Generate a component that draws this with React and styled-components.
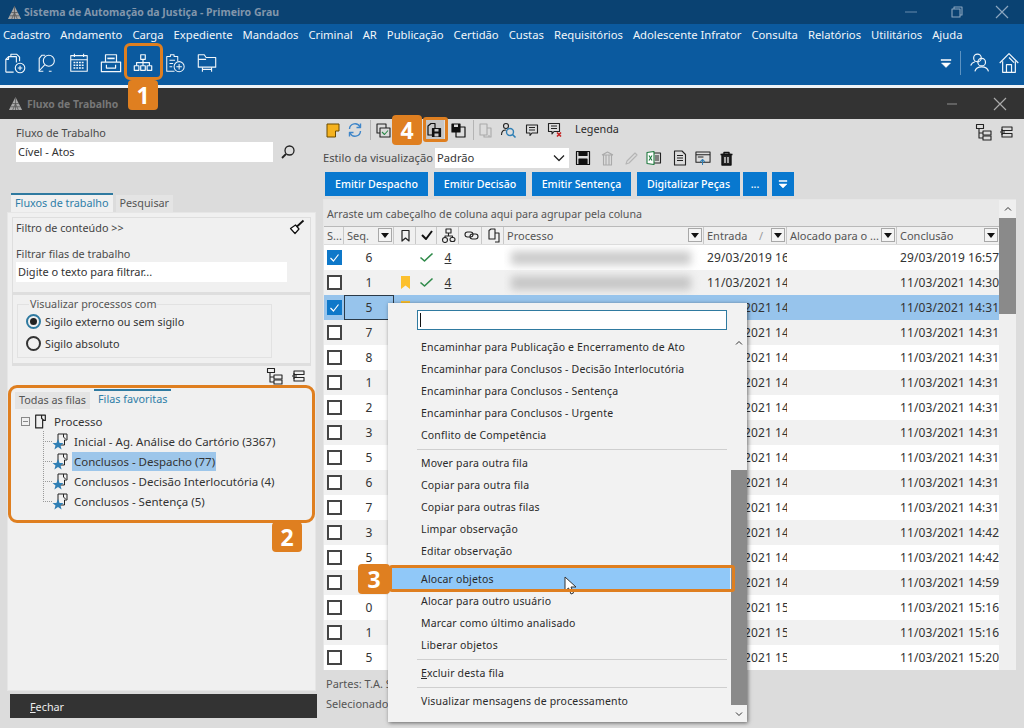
import * as React from 'react';
import styled, { createGlobalStyle } from 'styled-components';

const FONT = '"Noto Sans", "Open Sans", "Liberation Sans", sans-serif';

const Global = createGlobalStyle`
  html, body { margin: 0; padding: 0; background: #dcdcdc; }
  * { box-sizing: border-box; }
`;

const Page = styled.div`
  position: relative;
  width: 1024px;
  height: 728px;
  overflow: hidden;
  display: flex;
  flex-direction: column;
  font-family: ${FONT};
  font-size: 10.8px;
  color: #2b2b2b;
  background: #dcdcdc;
`;

const AppTitle = styled.div`
  height: 24px;
  display: flex;
  align-items: center;
  padding-left: 7px;
  gap: 2px;
  background: #0a4272;
`;
const WindowTitle = styled.div`
  height: 31px;
  background: #333;
  display: flex;
  align-items: center;
  padding-left: 8px;
  gap: 4px;
`;
const TitleText = styled.span`
  font-weight: 700;
  font-size: ${p => p.$size}px;
  color: ${p => p.$color};
`;
const WinButtons = styled.div`
  margin-left: auto;
  margin-top: ${p => p.$top || 0}px;
  display: flex;
  align-items: center;
  gap: ${p => p.$gap}px;
  padding-right: ${p => p.$right}px;
`;
const TopBand = styled.div`
  height: 61px;
  background: #0b5a9f;
  display: flex;
  flex-direction: column;
`;
const MenuBar = styled.div`
  height: 20px;
  display: flex;
  align-items: center;
  padding-left: 3px;
  gap: 10px;
  color: #f2f6fa;
  font-size: 11.25px;
  white-space: nowrap;
`;
const ToolBar = styled.div`
  height: 38px;
  display: flex;
  align-items: center;
  padding-left: 4px;
  gap: 10px;
`;
const ToolRight = styled.div`
  margin-left: auto;
  display: flex;
  align-items: center;
  padding-right: 4px;
`;
const ToolDivider = styled.div`
  width: 1px;
  height: 24px;
  background: #5d93c2;
  margin: 0 8px 0 8px;
`;
const ToolGap = styled.span`
  width: 7px;
`;
const WhiteLine = styled.div`
  height: 3px;
  background: #eef3f7;
`;
const Main = styled.div`
  flex: 1;
  display: flex;
  min-height: 0;
`;

const Left = styled.div`
  width: 320px;
  padding: 6px 4px 10px 7px;
  display: flex;
  flex-direction: column;
`;
const Label = styled.div`
  color: #4a4a4a;
  line-height: 15px;
  margin-bottom: ${p => p.$mb || 0}px;
`;
const FieldBlock = styled.div`
  padding-left: 9px;
`;
const FieldRow = styled.div`
  display: flex;
  align-items: center;
  gap: 7px;
  margin-top: 2px;
`;
const TextBox = styled.div`
  width: ${p => p.$w}px;
  height: 20px;
  padding-left: 2px;
  background: #fff;
  line-height: 20px;
  font-size: 11px;
  color: #333;
`;
const Tabs = styled.div`
  display: flex;
  align-items: flex-end;
  gap: 3px;
  margin: 31px 0 0 4px;
`;
const Tab = styled.div`
  padding: 0 4px;
  height: ${p => (p.$active ? 19 : 17)}px;
  line-height: 16px;
  white-space: nowrap;
  color: ${p => (p.$active ? '#2f7ea8' : '#555')};
  background: ${p => (p.$active ? '#f0f0f0' : '#e4e4e4')};
  border-top: ${p => (p.$active ? '2px solid #2f7aa0' : 'none')};
`;
const TabPanel = styled.div`
  flex: 1;
  background: #f0f0f0;
  border: 1px solid #e6e6e6;
  padding: 4px 4px 0 4px;
  display: flex;
  flex-direction: column;
`;
const FilterSection = styled.div`
  height: 78px;
  padding: 0 5px 0 3px;
  border: 1px solid #dedede;
  border-width: 1px 1px 3px 1px;
`;
const FilterHead = styled.div`
  display: flex;
  justify-content: space-between;
  align-items: center;
  height: 18px;
  margin-bottom: 10px;
  color: #444;
`;
const VisSection = styled.div`
  height: 71px;
  padding: 9px 0 0 4px;
  border: 1px solid #dedede;
  border-width: 0 1px 3px 1px;
`;
const GroupBox = styled.div`
  position: relative;
  width: 255px;
  height: 54px;
  border: 1px solid #e2e2e2;
  padding: 5px 0 0 8px;
`;
const GroupTitle = styled.span`
  position: absolute;
  top: -9px;
  left: 11px;
  padding: 0 1px;
  background: #f0f0f0;
  color: #555;
`;
const RadioRow = styled.div`
  display: flex;
  align-items: center;
  gap: 4px;
  height: 22px;
  color: #333;
`;
const Radio = styled.span`
  width: 15px;
  height: 15px;
  border-radius: 50%;
  border: 2px solid ${p => (p.$on ? '#2f7aa0' : '#333')};
  display: flex;
  align-items: center;
  justify-content: center;
  &::after {
    content: '';
    width: 7px;
    height: 7px;
    border-radius: 50%;
    background: ${p => (p.$on ? '#222' : 'transparent')};
  }
`;
const TreeTools = styled.div`
  height: 20px;
  display: flex;
  justify-content: flex-end;
  align-items: center;
  gap: 7px;
  padding-right: 6px;
`;
const TreeTabs = styled.div`
  display: flex;
  gap: 4px;
  padding-left: 3px;
  margin-top: 6px;
`;
const TreeTab = styled.div`
  height: 17px;
  padding: 0 4px;
  line-height: 16px;
  color: ${p => (p.$active ? '#2f7ea8' : '#555')};
  background: ${p => (p.$active ? 'transparent' : '#e4e4e4')};
  border-top: ${p => (p.$active ? '2px solid #2f7aa0' : 'none')};
  margin-top: ${p => (p.$active ? -3 : 0)}px;
  white-space: nowrap;
`;
const TreeList = styled.div`
  margin-top: 2px;
  padding-left: 9px;
  font-size: 11.5px;
`;
const TreeRoot = styled.div`
  height: 20px;
  display: flex;
  align-items: center;
  gap: 3px;
  color: #333;
`;
const Plus = styled.span`
  width: 9px;
  height: 9px;
  border: 1px solid #888;
  background: linear-gradient(#888, #888) center / 5px 1px no-repeat;
`;
const TreeNode = styled.div`
  height: 20px;
  display: flex;
  align-items: center;
  margin-left: 22px;
  padding-left: 9px;
  gap: 2px;
  color: #333;
  background:
    repeating-linear-gradient(#999 0 1px, transparent 1px 2px) 0 0 / 1px ${p => (p.$last ? '50%' : '100%')} no-repeat,
    repeating-linear-gradient(90deg, #999 0 1px, transparent 1px 2px) 0 50% / 9px 1px no-repeat;
`;
const NodeText = styled.span`
  padding: 0 1px 0 2px;
  line-height: 19px;
  white-space: nowrap;
  background: ${p => (p.$sel ? '#9dc6ea' : 'transparent')};
`;
const CloseBar = styled.div`
  height: 24px;
  margin: 3px -1px 0 3px;
  background: #333;
  color: #eee;
  line-height: 25px;
  padding-left: 20px;
  u { text-decoration: underline; }
`;

const Right = styled.div`
  flex: 1;
  min-width: 0;
  padding: 0 8px 0 3px;
  display: flex;
  flex-direction: column;
`;
const ActionBar = styled.div`
  height: 22px;
  padding-left: 2px;
  display: flex;
  align-items: center;
`;
const BarSep = styled.span`
  width: 1px;
  height: 20px;
  background: #b4b4b4;
  margin: 0 ${p => p.$m ?? 6}px;
  flex-shrink: 0;
`;
const IconSlot = styled.span`
  width: ${p => p.$w}px;
  height: ${p => (p.$hl ? '20px' : 'auto')};
  display: flex;
  align-items: center;
  justify-content: center;
  flex-shrink: 0;
  background: ${p => (p.$hl ? '#c6c6c6' : 'transparent')};
`;
const LegendLink = styled.span`
  margin-left: 9px;
  line-height: 20px;
  padding-bottom: 2px;
`;
const StyleRow = styled.div`
  height: 20px;
  margin-top: 7px;
  display: flex;
  align-items: center;
  white-space: nowrap;
  color: #4a4a4a;
  font-size: 11.2px;
`;
const StyleLabel = styled.span`
  width: 112px;
  padding-bottom: 1px;
`;
const SelectBox = styled.div`
  width: 134px;
  height: 20px;
  margin-right: 2px;
  padding: 0 4px 1px 2px;
  background: #fff;
  color: #333;
  display: flex;
  align-items: center;
  justify-content: space-between;
`;
const Buttons = styled.div`
  display: flex;
  gap: 6px;
  padding-left: 2px;
  margin-top: 4px;
`;
const Btn = styled.div`
  width: ${p => p.$w}px;
  height: 24px;
  margin-left: ${p => p.$ml || 0}px;
  background: #0878cf;
  color: #fff;
  font-size: 10.6px;
  font-weight: 500;
  display: flex;
  align-items: center;
  justify-content: center;
`;
const GridWrap = styled.div`
  margin-top: 3px;
  height: 471px;
  display: flex;
  background: #f2f2f2;
  border: 1px solid #e6e6e6;
  border-width: 1px 0 0 1px;
`;
const GridBody = styled.div`
  flex: 1;
  min-width: 0;
`;
const GroupHint = styled.div`
  height: 26px;
  line-height: 28px;
  padding-left: 3px;
  background: #e8e8e8;
  color: #555;
  font-size: 10.7px;
`;
const Cols = styled.div`
  display: grid;
  grid-template-columns: 20px 50px 22px 21px 22px 23px 22px 200px 83px 110px 103px;
`;
const HeadRow = styled(Cols)`
  height: 19px;
  background: #f0f0f0;
  border-top: 1px solid #b9b9b9;
  border-bottom: 1px solid #dcdcdc;
`;
const HeadCell = styled.div`
  display: flex;
  align-items: center;
  justify-content: ${p => (p.$center ? 'center' : 'space-between')};
  padding: 0 1px 1px 3px;
  border-right: 1px solid #c8c8c8;
  color: #555;
  font-size: 11px;
  overflow: hidden;
  white-space: nowrap;
`;
const SortMark = styled.span`
  color: #999;
  margin-left: auto;
  margin-right: 8px;
`;
const FilterBtn = styled.span`
  width: 14px;
  height: 14px;
  flex-shrink: 0;
  border: 1px solid #a8a8a8;
  background: #f4f4f4;
  display: flex;
  align-items: center;
  justify-content: center;
  &::after {
    content: '';
    border: 4px solid transparent;
    border-top: 5px solid #111;
    border-bottom: 0;
  }
`;
const Row = styled(Cols)`
  height: 25px;
  background: ${p => (p.$sel ? '#97c4ec' : p.$alt ? '#f1f1f1' : '#fff')};
  color: #333;
`;
const Cell = styled.div`
  display: flex;
  align-items: center;
  justify-content: center;
  overflow: hidden;
  white-space: nowrap;
  font-size: 12px;
  line-height: 13px;
  min-width: 0;
`;
const SeqCell = styled(Cell)`
  border: ${p => (p.$focus ? '1px solid #2b3a48' : 'none')};
`;
const DateCell = styled(Cell)`
  justify-content: flex-start;
  padding-left: 3px;
  letter-spacing: 0.1px;
`;
const Check = styled.span`
  width: 15px;
  height: 15px;
  display: flex;
  align-items: center;
  justify-content: center;
  background: ${p => (p.$on ? '#0e78c9' : '#fff')};
  border: 2px solid ${p => (p.$on ? '#0e78c9' : '#444')};
`;
const CountLink = styled.span`
  text-decoration: underline;
  font-size: 12px;
  line-height: 15px;
`;
const Smudge = styled.div`
  width: 180px;
  height: 14px;
  margin-left: 4px;
  background: #a9a9a9;
  filter: blur(4px);
  opacity: 0.6;
`;
const ScrollCol = styled.div`
  width: 17px;
  background: #efefef;
  display: flex;
  flex-direction: column;
  align-items: stretch;
`;
const ScrollArrow = styled.div`
  height: ${p => p.$h}px;
  display: flex;
  align-items: center;
  justify-content: center;
`;
const ScrollThumb = styled.div`
  height: ${p => p.$h}px;
  background: #8a8a8a;
`;
const StatusLine = styled.div`
  height: 20px;
  line-height: 20px;
  padding-left: 3px;
  color: #555;
  font-size: 11px;
  white-space: nowrap;
`;
const Status = styled.div`
  margin-top: 4px;
`;

const Menu = styled.div`
  position: absolute;
  left: 388px;
  top: 303px;
  width: 359px;
  height: 419px;
  display: flex;
  background: #f2f2f2;
  box-shadow: 1px 1px 4px rgba(0, 0, 0, 0.55);
`;
const MenuList = styled.div`
  flex: 1;
  padding-top: 7px;
`;
const MenuInput = styled.div`
  width: 310px;
  height: 20px;
  margin: 0 0 6px 29px;
  background: #fff;
  border: 1px solid #2f7aa0;
  display: flex;
  align-items: center;
  padding-left: 2px;
  &::after {
    content: '';
    width: 1px;
    height: 14px;
    background: #111;
  }
`;
const MenuItem = styled.div`
  height: 22px;
  line-height: 22px;
  margin-left: 2px;
  margin-right: 1px;
  padding-left: 31px;
  color: #2a2a2a;
  font-size: 10.5px;
  letter-spacing: 0.17px;
  background: ${p => (p.$hot ? '#90c8f8' : 'transparent')};
  white-space: nowrap;
  u { text-decoration: underline; }
`;
const MenuSep = styled.div`
  height: 6px;
  margin: 0 4px 0 29px;
  display: flex;
  align-items: center;
  &::after {
    content: '';
    flex: 1;
    height: 1px;
    background: #cfcfcf;
  }
`;
const MenuScroll = styled.div`
  width: 16px;
  margin-top: 33px;
  display: flex;
  flex-direction: column;
`;
const ScrollGap = styled.div`
  flex: 1;
`;

const CalloutBox = styled.div`
  position: absolute;
  left: ${p => p.$x}px;
  top: ${p => p.$y}px;
  width: ${p => p.$w}px;
  height: ${p => p.$h}px;
  border: 3px solid #df7f20;
  border-radius: ${p => p.$r ?? 6}px;
`;
const CalloutTag = styled.div`
  position: absolute;
  left: ${p => p.$x}px;
  top: ${p => p.$y}px;
  width: ${p => p.$w || 30}px;
  height: 30px;
  background: #df7f20;
  border-radius: 4px;
  color: #fff;
  font-family: "Open Sans", sans-serif;
  font-weight: 700;
  font-size: 23px;
  line-height: 30px;
  text-align: center;
`;
const Pointer = styled.svg`
  position: absolute;
  left: 564px;
  top: 576px;
`;

const Svg = ({ s = 16, vb, c = '#222', w = 1.1, fill = 'none', children }) => (
  <svg
    width={s}
    height={s}
    viewBox={vb || `0 0 ${s} ${s}`}
    fill={fill}
    stroke={c}
    strokeWidth={w}
    strokeLinejoin="round"
  >
    {children}
  </svg>
);

const Logo = ({ s = 16 }) => (
  <svg width={s} height={s} viewBox="0 0 16 16">
    <polygon points="8,1 15,15 1,15" fill="#a8a8a8" />
    <path d="M8 1V15M4.5 8H11.5M3 11.5H13M5 15L8 8L11 15" stroke="#555" strokeWidth="0.8" fill="none" />
  </svg>
);

const W = '#f2f7fb';
const TOOL_ICONS = [
  <Svg s={24} c={W} w={1.2}>
    <path d="M7.5 5V2.5H14L17 5.5V10" />
    <path d="M2 22V8L5 5H13.5V11.5M2 22H10.5" />
    <path d="M5 5V8H2" />
    <circle cx="17.5" cy="17.5" r="5.2" />
    <path d="M17.5 15V20M15 17.5H20" />
  </Svg>,
  <Svg s={24} c={W} w={1.2}>
    <path d="M8 21H3.5V7L6.5 3.5H10M17 21H14" />
    <circle cx="14" cy="9.5" r="6" />
    <path d="M9.5 14L3 21" />
  </Svg>,
  <Svg s={24} c={W} w={1.2}>
    <rect x="3" y="4" width="18" height="17" />
    <path d="M3 8.5H21M7 2V5.5M17 2V5.5" />
    <path d="M6 11.5H18M6 14.5H18M6 17.5H18" strokeDasharray="2 1" strokeWidth="1.6" />
  </Svg>,
  <Svg s={24} c={W} w={1.3}>
    <path d="M6 11V3H18V11" />
    <path d="M8 7H16" strokeWidth="1.8" />
    <path d="M1.5 11H22.5V21.5H1.5Z" />
    <path d="M7 14V17.5H17V14" />
  </Svg>,
  <Svg s={24} c={W} w={1.3}>
    <rect x="9.5" y="3" width="5" height="5" />
    <rect x="2.5" y="15" width="5" height="5" />
    <rect x="9.5" y="15" width="5" height="5" />
    <rect x="16.5" y="15" width="5" height="5" />
    <path d="M12 8V15M5 15V11.5H19V15" />
  </Svg>,
  <Svg s={24} c={W} w={1.1}>
    <path d="M11.5 21H3V5H7V3H11V5H15V10" />
    <path d="M6 9H12M6 12.5H10M6 16H9" />
    <circle cx="16.5" cy="16" r="5.5" />
    <path d="M16.5 13V19M13.5 16H19.5" />
  </Svg>,
  <Svg s={24} c={W} w={1.2}>
    <path d="M2.5 16.5V3H9L11 6H21.5V16.5H2.5Z" />
    <path d="M2.5 8H11M7 16.5V21.5M17 16.5V21.5M7 19H17" />
  </Svg>
];

const MENU = [
  'Cadastro', 'Andamento', 'Carga', 'Expediente', 'Mandados', 'Criminal', 'AR', 'Publicação',
  'Certidão', 'Custas', 'Requisitórios', 'Adolescente Infrator', 'Consulta', 'Relatórios', 'Utilitários', 'Ajuda'
];

const D = (t, d = '11/03/2021') => `${d} ${t}`;
const ROWS = [
  { seq: 6, on: true, ok: true, date: D('16:57', '29/03/2019') },
  { seq: 1, mark: true, ok: true, date: D('14:30') },
  { seq: 5, on: true, mark: true, ok: true, date: D('14:31'), sel: true },
  { seq: 7, date: D('14:31') },
  { seq: 8, date: D('14:31') },
  { seq: 1, date: D('14:31') },
  { seq: 2, date: D('14:31') },
  { seq: 3, date: D('14:31') },
  { seq: 5, date: D('14:31') },
  { seq: 6, date: D('14:31') },
  { seq: 7, date: D('14:31') },
  { seq: 3, date: D('14:42') },
  { seq: 5, date: D('14:42') },
  { seq: '', date: D('14:59') },
  { seq: 0, date: D('15:16') },
  { seq: 1, date: D('15:16') },
  { seq: 5, date: D('15:20') }
];

const NODES = [
  'Inicial - Ag. Análise do Cartório (3367)',
  'Conclusos - Despacho (77)',
  'Conclusos - Decisão Interlocutória (4)',
  'Conclusos - Sentença (5)'
];

const MENU_ITEMS = [
  ['Encaminhar para Publicação e Encerramento de Ato', 'Encaminhar para Conclusos - Decisão Interlocutória', 'Encaminhar para Conclusos - Sentença', 'Encaminhar para Conclusos - Urgente', 'Conflito de Competência'],
  ['Mover para outra fila', 'Copiar para outra fila', 'Copiar para outras filas', 'Limpar observação', 'Editar observação'],
  ['Alocar objetos', 'Alocar para outro usuário', 'Marcar como último analisado', 'Liberar objetos'],
  [<React.Fragment key="x"><u>E</u>xcluir desta fila</React.Fragment>],
  ['Visualizar mensagens de processamento']
];

const PageIcon = ({ c = '#222', s = 14 }) => (
  <Svg s={s} vb="0 0 14 14" c={c}>
    <path d="M2.5 1H11.5V6H9V13H2.5Z" />
    <path d="M8 1V4L10 6" />
  </Svg>
);

const StarDoc = () => (
  <svg width="18" height="18" viewBox="0 0 18 18">
    <path d="M6 2H15V8H12.5V13H6Z" fill="none" stroke="#222" strokeWidth="1" />
    <path d="M11.5 2V5L13.5 7" fill="none" stroke="#222" strokeWidth="1" />
    <polygon points="6,7 7.6,11 11.5,11 8.5,13.5 9.6,17.5 6,15 2.4,17.5 3.5,13.5 0.5,11 4.4,11" fill="#2f7fb5" />
  </svg>
);

const TreeIcon = ({ c = '#222' }) => (
  <Svg s={18} c={c} w={1.1}>
    <rect x="1.5" y="1.5" width="7" height="4" />
    <path d="M4 5.5V15H8M4 10H8" />
    <rect x="8" y="8" width="8" height="4" />
    <rect x="8" y="13" width="8" height="4" />
  </Svg>
);

const CollapseIcon = () => (
  <Svg s={14} c="#222">
    <rect x="3" y="2" width="10" height="3.5" />
    <rect x="3" y="8.5" width="10" height="3.5" />
    <path d="M3 4V10M1 7H6" />
  </Svg>
);

const SaveIcon = ({ c = '#111' }) => (
  <Svg s={16} c={c} w={1.2}>
    <path d="M1.5 1.5H14.5V14.5H1.5Z" />
    <rect x="4" y="1.5" width="8" height="4" fill={c} />
    <rect x="4" y="9" width="8" height="5.5" fill={c} />
  </Svg>
);

const Chevron = ({ up }) => (
  <Svg s={10} c="#333" w={1}>
    <path d={up ? 'M2 6.5L5 3.5L8 6.5' : 'M2 3.5L5 6.5L8 3.5'} />
  </Svg>
);

export default function App() {
  return (
    <Page>
      <Global />
      <AppTitle>
        <Logo s={15} />
        <TitleText $color="#8296ab" $size={10.5}>Sistema de Automação da Justiça - Primeiro Grau</TitleText>
        <WinButtons $gap={31} $right={14}>
          <Svg s={14} c="#5f86a8"><path d="M1 7H13" /></Svg>
          <Svg s={14} c="#8ba6bf"><path d="M3 4H11V12H3Z M5 4V2H13V10H11" /></Svg>
          <Svg s={16} c="#8ba6bf" w={1.2}><path d="M2 2L14 14M14 2L2 14" /></Svg>
        </WinButtons>
      </AppTitle>
      <TopBand>
        <MenuBar>{MENU.map(m => <span key={m}>{m}</span>)}</MenuBar>
        <ToolBar>
          {TOOL_ICONS.map((icon, i) => <IconSlot key={i} $w={22}>{icon}</IconSlot>)}
          <ToolRight>
            <Svg s={12} c="#fff" fill="#fff" w={0.5}>
              <path d="M1 2.5H11V3.5H1Z" />
              <path d="M1.5 6H10.5L6 10.5Z" />
            </Svg>
            <ToolDivider />
            <Svg s={22} vb="0 0 26 26" c={W} w={1.4}>
              <circle cx="10" cy="7" r="4.5" />
              <path d="M2 16C3 13 5 12 7 11.5" />
              <circle cx="15" cy="12" r="4.5" />
              <path d="M7 23C8 19 11 17.5 15 17.5C19 17.5 22 19 23 23" />
            </Svg>
            <ToolGap />
            <Svg s={22} vb="0 0 26 26" c={W} w={1.4}>
              <path d="M2 13L13 2L24 13" />
              <path d="M5.5 11V24H20.5V11" />
              <path d="M10 24V15H16V24" />
              <path d="M13 6.5L19 12.5" />
            </Svg>
          </ToolRight>
        </ToolBar>
      </TopBand>
      <WhiteLine />
      <WindowTitle>
        <Logo s={15} />
        <TitleText $color="#777" $size={10.4}>Fluxo de Trabalho</TitleText>
        <WinButtons $gap={34} $right={16}>
          <Svg s={12} c="#888"><path d="M1 6H11" /></Svg>
          <Svg s={16} c="#aaa" w={1.2}><path d="M2 2L14 14M14 2L2 14" /></Svg>
        </WinButtons>
      </WindowTitle>
      <Main>
        <Left>
          <FieldBlock>
            <Label>Fluxo de Trabalho</Label>
            <FieldRow>
              <TextBox $w={257}>Cível - Atos</TextBox>
              <Svg s={16} c="#222" w={1.3}>
                <circle cx="9.5" cy="6.5" r="4.5" />
                <path d="M6 10L2 14" strokeWidth="1.8" />
              </Svg>
            </FieldRow>
          </FieldBlock>
          <Tabs>
            <Tab $active>Fluxos de trabalho</Tab>
            <Tab>Pesquisar</Tab>
          </Tabs>
          <TabPanel>
            <FilterSection>
              <FilterHead>
                <span>Filtro de conteúdo &gt;&gt;</span>
                <Svg s={16} c="#111" w={1.2}>
                  <path d="M1.5 9.5L6.5 6L10 10L6 14.5Z" fill="#fff" />
                  <path d="M8 7.5L14.5 1.5" strokeWidth="1.8" />
                </Svg>
              </FilterHead>
              <Label $mb={1}>Filtrar filas de trabalho</Label>
              <TextBox $w={271}>Digite o texto para filtrar...</TextBox>
            </FilterSection>
            <VisSection>
              <GroupBox>
                <GroupTitle>Visualizar processos com</GroupTitle>
                <RadioRow><Radio $on />Sigilo externo ou sem sigilo</RadioRow>
                <RadioRow><Radio />Sigilo absoluto</RadioRow>
              </GroupBox>
            </VisSection>
            <TreeTools>
              <TreeIcon />
              <CollapseIcon />
            </TreeTools>
            <TreeTabs>
              <TreeTab>Todas as filas</TreeTab>
              <TreeTab $active>Filas favoritas</TreeTab>
            </TreeTabs>
            <TreeList>
              <TreeRoot><Plus /><PageIcon s={15} /><span>&nbsp;Processo</span></TreeRoot>
              {NODES.map((n, i) => (
                <TreeNode key={n} $last={i === NODES.length - 1}>
                  <StarDoc />
                  <NodeText $sel={i === 1}>{n}</NodeText>
                </TreeNode>
              ))}
            </TreeList>
          </TabPanel>
          <CloseBar><u>F</u>echar</CloseBar>
        </Left>
        <Right>
          <ActionBar>
            <IconSlot $w={15}>
              <svg width="14" height="15" viewBox="0 0 14 15">
                <path d="M1 1H13V8H9.5V14H1Z" fill="#f5b21e" stroke="#6b4a00" strokeWidth="1" />
              </svg>
            </IconSlot>
            <IconSlot $w={30}>
              <Svg s={16} c="#3f86c9" w={1.4}>
                <path d="M2.5 7A5.5 5.5 0 0 1 13 5M13.5 9A5.5 5.5 0 0 1 3 11" />
                <path d="M13.5 1.5V5.5H9.5M2.5 14.5V10.5H6.5" />
              </Svg>
            </IconSlot>
            <BarSep $m={0} />
            <IconSlot $w={24}>
              <Svg s={15} c="#222">
                <rect x="1" y="1" width="9" height="9" />
                <rect x="4" y="5" width="10" height="9" fill="#dcdcdc" />
                <path d="M6 9L8.5 11.5L12 7.5" stroke="#2c8a4a" />
              </Svg>
            </IconSlot>
            <IconSlot $w={29} />
            <IconSlot $w={20} $hl>
              <Svg s={16} c="#111" w={1.2}>
                <path d="M7 13H2V4L5 1.5H9V6" />
                <rect x="6.5" y="6.5" width="8" height="8" fill="#111" />
                <rect x="8.5" y="7" width="4" height="2.5" fill="#c6c6c6" stroke="none" />
                <rect x="8.5" y="11.5" width="4" height="3" fill="#c6c6c6" stroke="none" />
              </Svg>
            </IconSlot>
            <IconSlot $w={28}>
              <Svg s={15} c="#111" w={1.2}>
                <rect x="1" y="1" width="8" height="8" fill="#111" />
                <rect x="3" y="1.5" width="4" height="2.5" fill="#dcdcdc" stroke="none" />
                <path d="M9 4H14V14H5V9" />
              </Svg>
            </IconSlot>
            <BarSep $m={1} />
            <IconSlot $w={21}>
              <Svg s={15} c="#aaa">
                <path d="M2 1H9V12H2Z" />
                <path d="M9 5H13V14H6V12M11 12V14" />
              </Svg>
            </IconSlot>
            <IconSlot $w={24}>
              <Svg s={17} c="#222">
                <circle cx="6" cy="4" r="2.5" />
                <path d="M1.5 13C1.5 9.5 3 8 6 8" />
                <circle cx="10" cy="10" r="3.5" stroke="#2f7fb5" strokeWidth="1.4" />
                <path d="M12.5 12.5L15.5 15.5" stroke="#2f7fb5" strokeWidth="1.6" />
              </Svg>
            </IconSlot>
            <IconSlot $w={24}>
              <Svg s={14} c="#222">
                <path d="M1.5 2H12.5V10H7L5 12.5V10H1.5Z" />
                <path d="M4 4.5H10M4 7H10" />
              </Svg>
            </IconSlot>
            <IconSlot $w={22}>
              <Svg s={16} c="#222">
                <path d="M1.5 1.5H12.5V9.5H7L5 12V9.5H1.5Z" />
                <path d="M4 4H10M4 6.5H10" />
                <path d="M10 10.5L14 14.5M14 10.5L10 14.5" stroke="#c42020" strokeWidth="1.6" />
              </Svg>
            </IconSlot>
            <LegendLink>Legenda</LegendLink>
            <WinButtons $gap={6} $right={3} $top={4}>
              <TreeIcon />
              <CollapseIcon />
            </WinButtons>
          </ActionBar>
          <StyleRow>
            <StyleLabel>Estilo da visualização</StyleLabel>
            <SelectBox>
              <span>Padrão</span>
              <Svg s={12} c="#222" w={1.3}><path d="M1 3.5L6 8.5L11 3.5" /></Svg>
            </SelectBox>
            <IconSlot $w={24}><SaveIcon /></IconSlot>
            <IconSlot $w={24}>
              <Svg s={15} c="#aaa">
                <path d="M2 4H13M3 14H12M3.5 4V14M6 4V14M9 4V14M11.5 4V14M2 4L7.5 1L13 4" />
              </Svg>
            </IconSlot>
            <IconSlot $w={24}>
              <Svg s={15} c="#b5b5b5"><path d="M2 13L3 10L11 2L13 4L5 12Z" /></Svg>
            </IconSlot>
            <IconSlot $w={22}>
              <Svg s={16} c="#222">
                <path d="M6 3H14.5V13H6" />
                <path d="M9 6H13M9 8H13M9 10H13" />
                <path d="M1 2.5L8 1.5V14.5L1 13.5Z" fill="#fff" stroke="#1f7a3f" />
                <path d="M3 5.5L6 10.5M6 5.5L3 10.5" stroke="#1f7a3f" />
              </Svg>
            </IconSlot>
            <IconSlot $w={30}>
              <Svg s={16} c="#222">
                <path d="M2.5 1H10L13.5 4.5V15H2.5Z" />
                <path d="M5 5.5H11M5 8H11M5 10.5H11" />
              </Svg>
            </IconSlot>
            <IconSlot $w={16}>
              <Svg s={17} c="#222">
                <rect x="1" y="1.5" width="15" height="11" />
                <path d="M1 4.5H16M3 7H9" />
                <path d="M8 15.5V9.5M5.5 12L8 9.5L10.5 12" stroke="#2f7fb5" />
              </Svg>
            </IconSlot>
            <IconSlot $w={30}>
              <Svg s={15} c="#111" w={1.4}>
                <path d="M1.5 3.5H13.5M5 3.5V1.5H10V3.5" />
                <path d="M3 3.5H12V14H3Z" fill="#222" />
                <path d="M6 6V12M9 6V12" stroke="#ddd" />
              </Svg>
            </IconSlot>
          </StyleRow>
          <Buttons>
            <Btn $w={103}>Emitir Despacho</Btn>
            <Btn $w={92}>Emitir Decisão</Btn>
            <Btn $w={99}>Emitir Sentença</Btn>
            <Btn $w={103}>Digitalizar Peças</Btn>
            <Btn $w={24} $ml={-3}>...</Btn>
            <Btn $w={22} $ml={-1}>
              <Svg s={12} c="#fff" fill="#fff" w={0.5}>
                <path d="M2 2.5H10V3.5H2Z" />
                <path d="M2 6H10L6 10Z" />
              </Svg>
            </Btn>
          </Buttons>
          <GridWrap>
            <GridBody>
              <GroupHint>Arraste um cabeçalho de coluna aqui para agrupar pela coluna</GroupHint>
              <HeadRow>
                <HeadCell>S...</HeadCell>
                <HeadCell>Seq.<FilterBtn /></HeadCell>
                <HeadCell $center>
                  <Svg s={13} c="#222" w={1.2}><path d="M3 1.5H10V12L6.5 9L3 12Z" /></Svg>
                </HeadCell>
                <HeadCell $center>
                  <Svg s={14} c="#111" w={2}><path d="M2 7L6 11L12 3" /></Svg>
                </HeadCell>
                <HeadCell $center>
                  <Svg s={15} c="#222">
                    <rect x="5" y="1" width="5" height="4" />
                    <circle cx="4" cy="12" r="2.5" />
                    <rect x="9" y="9.5" width="5" height="4" rx="2" />
                    <path d="M7.5 5V8M4 9.5V8H11.5V9.5" />
                  </Svg>
                </HeadCell>
                <HeadCell $center>
                  <Svg s={15} c="#222">
                    <rect x="1" y="4" width="8" height="5" rx="2.5" />
                    <rect x="6" y="6" width="8" height="5" rx="2.5" />
                  </Svg>
                </HeadCell>
                <HeadCell $center>
                  <Svg s={15} c="#222">
                    <path d="M3 11V2.5L5 1H9V11H3Z" />
                    <path d="M9 5H13V14H9" />
                  </Svg>
                </HeadCell>
                <HeadCell>Processo<FilterBtn /></HeadCell>
                <HeadCell>Entrada<SortMark>/</SortMark><FilterBtn /></HeadCell>
                <HeadCell>Alocado para o ...<FilterBtn /></HeadCell>
                <HeadCell>Conclusão<FilterBtn /></HeadCell>
              </HeadRow>
              {ROWS.map((r, i) => (
                <Row key={i} $alt={i % 2 === 1} $sel={r.sel}>
                  <Cell>
                    <Check $on={r.on}>
                      {r.on && <Svg s={11} c="#fff" w={1.2}><path d="M1.5 6L4.5 9L9.5 2.5" /></Svg>}
                    </Check>
                  </Cell>
                  <SeqCell $focus={r.sel}>{r.seq}</SeqCell>
                  <Cell>
                    {r.mark && (
                      <svg width="11" height="13" viewBox="0 0 11 13">
                        <path d="M1 0H10V13L5.5 9.5L1 13Z" fill="#fcc02e" />
                      </svg>
                    )}
                  </Cell>
                  <Cell>
                    {r.ok && <Svg s={15} c="#2f8a4a" w={1.6}><path d="M1.5 7.5L5.5 11L13.5 3.5" /></Svg>}
                  </Cell>
                  <Cell>{r.ok && <CountLink>4</CountLink>}</Cell>
                  <Cell />
                  <Cell />
                  <DateCell>{i < 2 && <Smudge />}</DateCell>
                  <DateCell>{r.date}</DateCell>
                  <DateCell />
                  <DateCell>{r.date}</DateCell>
                </Row>
              ))}
            </GridBody>
            <ScrollCol>
              <ScrollArrow $h={18}><Chevron up /></ScrollArrow>
              <ScrollThumb $h={96} />
            </ScrollCol>
          </GridWrap>
          <Status>
            <StatusLine>Partes: T.A. S</StatusLine>
            <StatusLine>Selecionado</StatusLine>
          </Status>
        </Right>
      </Main>

      <Menu>
        <MenuList>
          <MenuInput />
          {MENU_ITEMS.map((group, g) => (
            <React.Fragment key={g}>
              {g > 0 && <MenuSep />}
              {group.map((item, i) => (
                <MenuItem key={i} $hot={item === 'Alocar objetos'}>{item}</MenuItem>
              ))}
            </React.Fragment>
          ))}
        </MenuList>
        <MenuScroll>
          <ScrollArrow $h={14}><Chevron up /></ScrollArrow>
          <ScrollGap />
          <ScrollThumb $h={235} />
          <ScrollArrow $h={17}><Chevron /></ScrollArrow>
        </MenuScroll>
      </Menu>

      <Pointer width="14" height="21" viewBox="0 0 14 21">
        <path d="M1 1V15L4.5 12L7 18L9.5 17L7 11H12Z" fill="#fff" stroke="#333" strokeWidth="1" />
      </Pointer>

      <CalloutBox $x={124} $y={43} $w={39} $h={37} />
      <CalloutTag $x={128} $y={80}>1</CalloutTag>
      <CalloutBox $x={8} $y={385} $w={307} $h={138} $r={9} />
      <CalloutTag $x={272} $y={522}>2</CalloutTag>
      <CalloutBox $x={389} $y={565} $w={346} $h={27} $r={3} />
      <CalloutTag $x={358} $y={564} $w={32}>3</CalloutTag>
      <CalloutBox $x={423} $y={117} $w={25} $h={25} $r={3} />
      <CalloutTag $x={392} $y={115}>4</CalloutTag>
    </Page>
  );
}
